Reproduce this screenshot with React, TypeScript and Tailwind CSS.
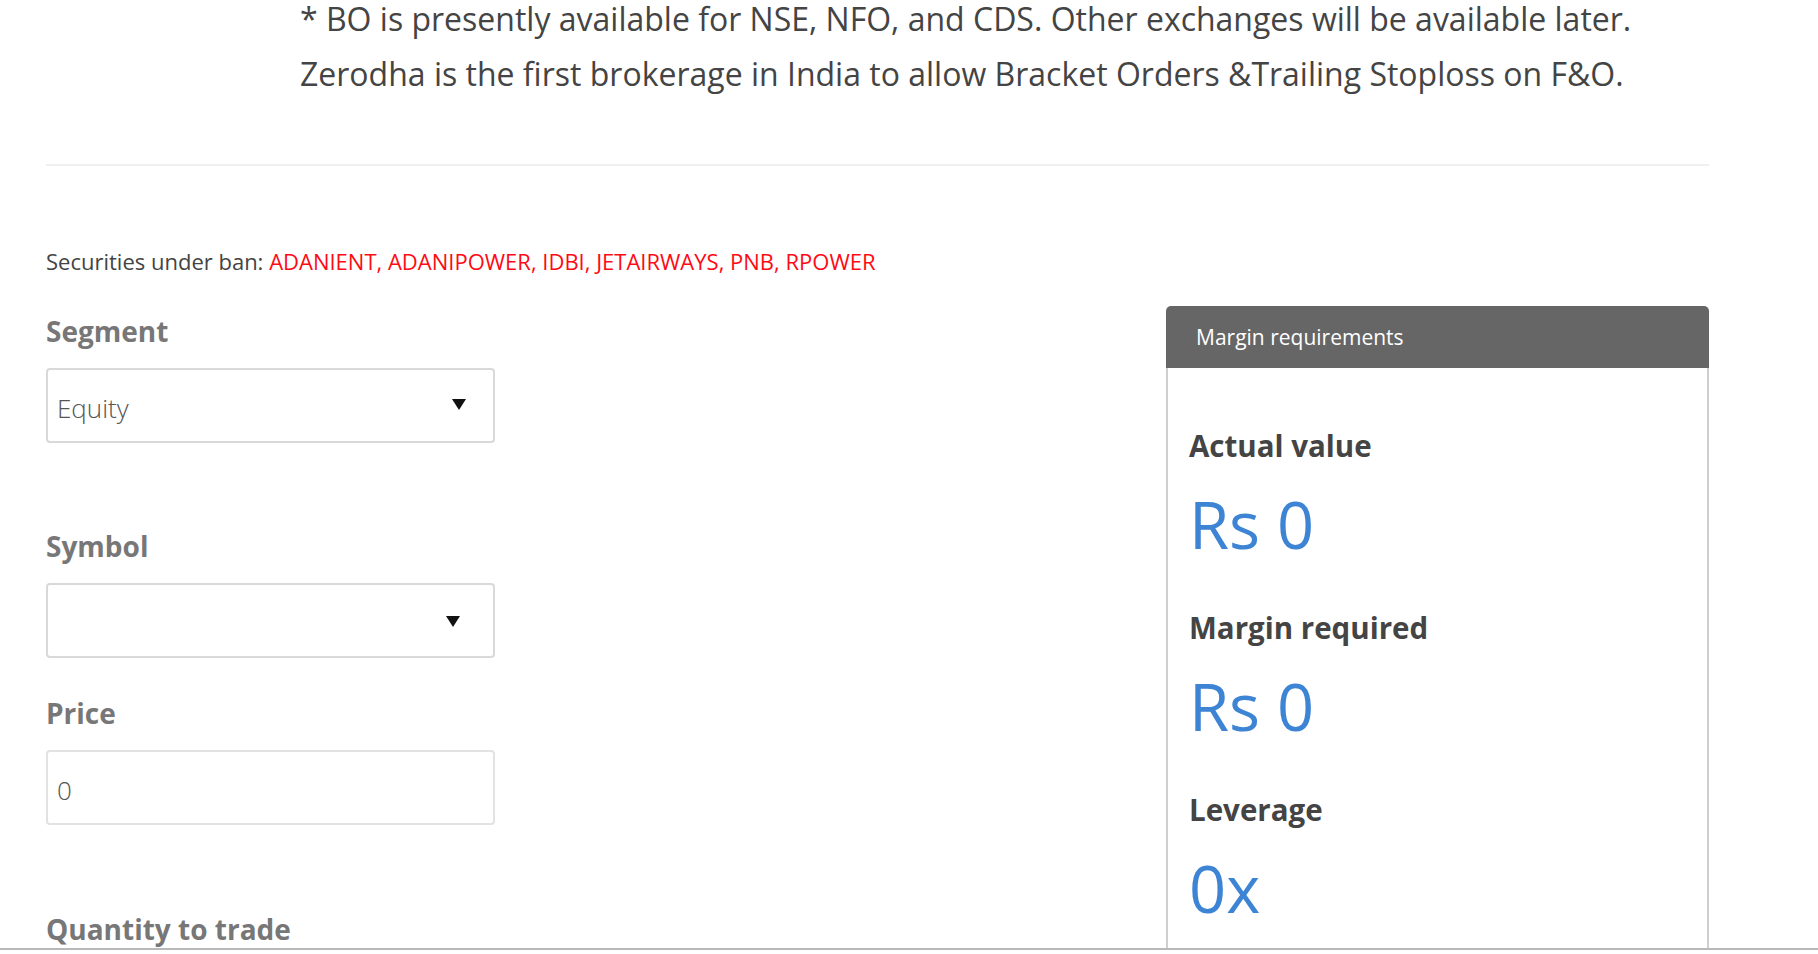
import React from 'react';

const font = { fontFamily: '"Open Sans", "Liberation Sans", sans-serif' };

function Caret() {
    return (
        <svg width="16" height="12" viewBox="0 0 16 12" className="shrink-0">
            <path d="M1 1 L15 1 L8 12 Z" fill="#111" />
        </svg>
    );
}

function SelectBox({ value, caretRight }: { value?: string; caretRight: string }) {
    return (
        <div className="h-[75px] w-full border-2 border-[#d9d9d9] rounded-[4px] flex items-center justify-between pl-[9px]">
            <span className="text-[26px] font-light text-[#555] mt-[6px]">{value}</span>
            <span className={caretRight}><Caret /></span>
        </div>
    );
}

function Field({ label, children, top }: { label: string; children: React.ReactNode; top: string }) {
    return (
        <div className={top}>
            <div className="text-[28px] leading-[36px] font-bold text-[#777] mb-[19px]">{label}</div>
            {children}
        </div>
    );
}

function Stat({ label, value, top }: { label: string; value: string; top: string }) {
    return (
        <div className={top}>
            <div className="text-[29.5px] leading-[36px] font-bold text-[#444]">{label}</div>
            <div className="mt-[21px] text-[65px] leading-[78px] text-[#3d85d4]">{value}</div>
        </div>
    );
}

export default function App() {
    return (
        <div className="relative w-[1818px] h-[954px] overflow-hidden bg-white" style={font}>
            <div className="px-[46px] pr-[109px]">
                {/* intro */}
                <div className="pl-[254px] mt-[-9px] text-[32px] leading-[55px] text-[#444]">
                    <div>* BO is presently available for NSE, NFO, and CDS. Other exchanges will be available later.</div>
                    <div>Zerodha is the first brokerage in India to allow Bracket Orders &amp;Trailing Stoploss on F&amp;O.</div>
                </div>

                <div className="mt-[63px] h-[2px] bg-[#f0f0f0]" />

                <div className="mt-[81px] text-[22px] leading-[28px] text-[#444]">
                    Securities under ban: <span className="text-[#ff0a14]">ADANIENT, ADANIPOWER, IDBI, JETAIRWAYS, PNB, RPOWER</span>
                </div>

                <div className="mt-[30px] flex justify-between items-start">
                    {/* form */}
                    <div className="w-[449px] pt-[8px]">
                        <Field label="Segment" top="">
                            <SelectBox value="Equity" caretRight="mr-[26px] -mt-[4px]" />
                        </Field>
                        <Field label="Symbol" top="mt-[85px]">
                            <SelectBox caretRight="mr-[32px]" />
                        </Field>
                        <Field label="Price" top="mt-[37px]">
                            <div className="h-[75px] w-full border-2 border-[#e2e2e2] rounded-[4px] flex items-center pl-[9px]">
                                <span className="text-[26px] font-light text-[#555] mt-[6px]">0</span>
                            </div>
                        </Field>
                        <Field label="Quantity to trade" top="mt-[86px]">
                            <div className="h-[75px]" />
                        </Field>
                    </div>

                    {/* margin box */}
                    <div className="w-[543px] pt-[1px]">
                        <div className="h-[62px] bg-[#666] rounded-t-[5px] flex items-center pl-[30px] pt-[2px] text-white text-[21px]">
                            Margin requirements
                        </div>
                        <div className="border-x-2 border-[#cfcfcf] h-[700px] pl-[21px] pt-[60px]">
                            <Stat label="Actual value" value="Rs 0" top="" />
                            <Stat label="Margin required" value="Rs 0" top="mt-[47px]" />
                            <Stat label="Leverage" value="0x" top="mt-[47px]" />
                        </div>
                    </div>
                </div>
            </div>

            {/* bottom edge */}
            <div className="absolute left-0 right-0 bottom-0 h-[6px] bg-white border-t-2 border-[#b8b8b8]" />
        </div>
    );
}
